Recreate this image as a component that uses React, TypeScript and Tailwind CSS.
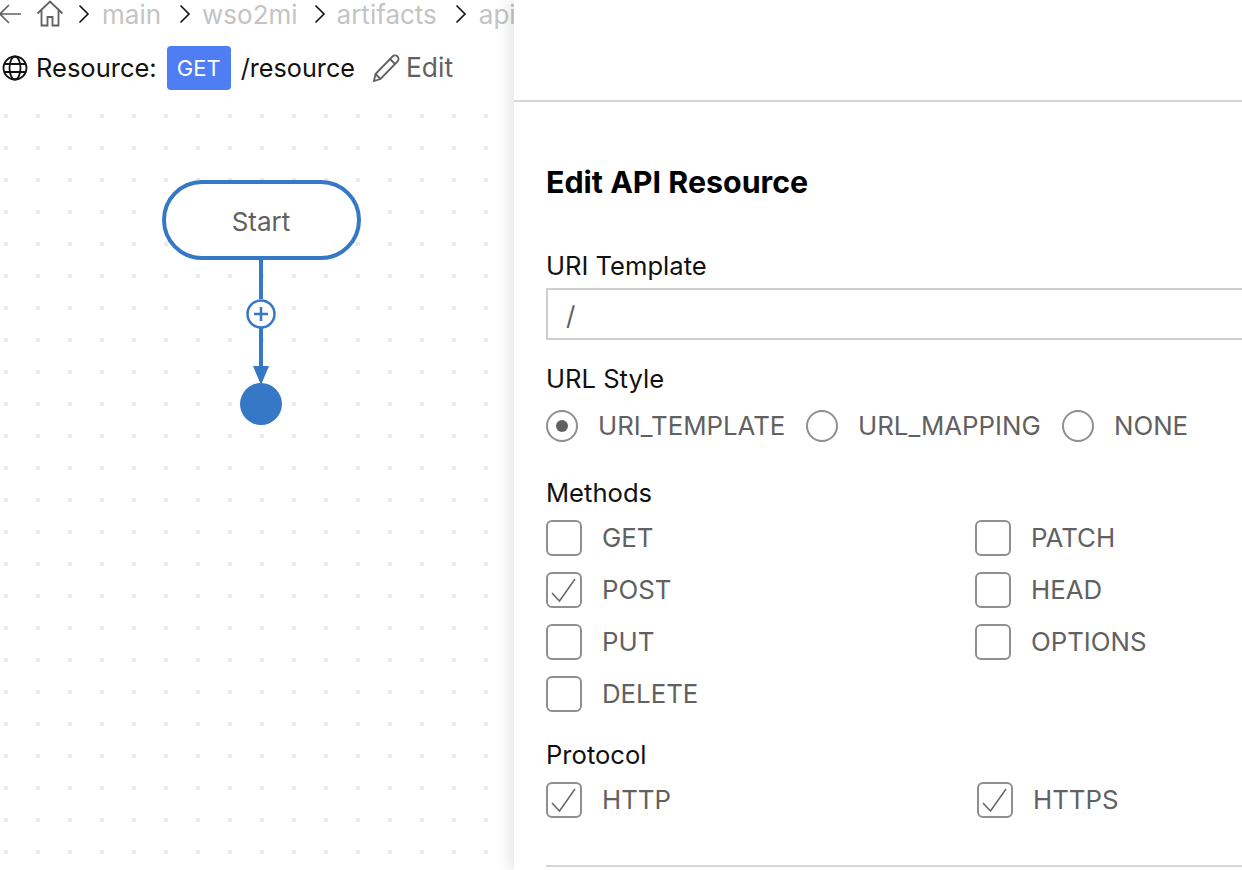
import React from "react";

const font = "font-['Inter',sans-serif]";

function Chevron() {
  return (
    <svg width="12" height="20" viewBox="0 0 12 20" fill="none" stroke="#111" strokeWidth="1.6" className="shrink-0">
      <path d="M1.5 1.5 10 10 1.5 18.5" />
    </svg>
  );
}

function Check({ label, checked }: { label: string; checked?: boolean }) {
  return (
    <div className="flex items-center gap-[20px] h-[36px]">
      <div className="w-[36px] h-[36px] rounded-[6px] border-2 border-[#8f8f8f] flex items-center justify-center shrink-0">
        {checked && (
          <svg width="32" height="32" viewBox="0 0 32 32" fill="none" stroke="#666" strokeWidth="1.5">
            <path d="M4 19 11.5 27 27 5" />
          </svg>
        )}
      </div>
      <span className="text-[25.800px] leading-[36px] text-[#616161]">{label}</span>
    </div>
  );
}

function Radio({ label, checked, w }: { label: string; checked?: boolean; w: string }) {
  return (
    <div className={`flex items-center gap-[20px] ${w}`}>
      <div className="w-[32px] h-[32px] rounded-full border-2 border-[#8f8f8f] flex items-center justify-center shrink-0">
        {checked && <div className="w-[12px] h-[12px] rounded-full bg-[#616161]" />}
      </div>
      <span className="text-[25.800px] leading-[36px] text-[#616161] whitespace-nowrap">{label}</span>
    </div>
  );
}

export default function App() {
  return (
    <div className={`${font} w-[1242px] h-[870px] overflow-hidden bg-white flex`}>
      <div className="w-[514px] shrink-0 h-full overflow-hidden flex flex-col">
        <div className="h-[28px] flex items-center whitespace-nowrap -ml-[3px] shrink-0">
          <svg width="26" height="24" viewBox="0 0 26 24" fill="none" stroke="#616161" strokeWidth="1.6" className="shrink-0">
            <path d="M24 12H3M12 3 3 12l9 9" />
          </svg>
          <svg width="28" height="28" viewBox="0 0 28 28" fill="none" stroke="#616161" strokeWidth="1.8" className="ml-[13px] shrink-0">
            <path d="M1.500 13.500 14 1.500l12.500 12M5.500 10v15.500h6V17h5v8.500h6V10" />
          </svg>
          <div className="ml-[14px]"><Chevron /></div>
          <span className="ml-[12px] text-[26px] text-[#c4c4c4]">main</span>
          <div className="ml-[18px]"><Chevron /></div>
          <span className="ml-[11px] text-[26px] text-[#c4c4c4]">wso2mi</span>
          <div className="ml-[16px]"><Chevron /></div>
          <span className="ml-[11px] text-[26px] text-[#c4c4c4]">artifacts</span>
          <div className="ml-[18px]"><Chevron /></div>
          <span className="ml-[12px] text-[26px] text-[#c4c4c4]">api</span>
        </div>
        <div className="h-[44px] mt-[18px] flex items-center whitespace-nowrap pl-[2px] shrink-0">
          <svg width="26" height="26" viewBox="0 0 26 26" fill="none" stroke="#111" strokeWidth="1.8" className="shrink-0">
            <circle cx="13" cy="13" r="11.500" />
            <ellipse cx="13" cy="13" rx="5.500" ry="11.500" />
            <path d="M2 9h22M2 17h22" />
          </svg>
          <span className="ml-[8px] pt-[1px] text-[25.500px] text-[#111]">Resource:</span>
          <span className="ml-[10px] w-[64px] h-[44px] rounded-[4px] bg-[#4f7df3] text-white text-[22px] flex items-center justify-center">GET</span>
          <span className="ml-[10px] pt-[2px] text-[25.200px] text-[#111]">/resource</span>
          <svg width="30" height="30" viewBox="0 0 30 30" fill="none" stroke="#616161" strokeWidth="1.8" className="ml-[17px] shrink-0">
            <path d="M2 28l1.500-7L20.500 3.500a3.500 3.500 0 0 1 5 0 3.500 3.500 0 0 1 0 5L8.500 26z M3.500 21 8.500 26 M18 6l5.500 5.500" />
          </svg>
          <span className="ml-[4px] text-[26.400px] text-[#616161]">Edit</span>
        </div>
        <div className="flex-1 flex flex-col items-center bg-[radial-gradient(#e6eaef_2px,transparent_2.500px)] bg-[size:32px_32px] bg-[position:-10px_10px]">
          <div className="mt-[90px] ml-[8px] flex flex-col items-center">
            <div className="w-[199px] h-[80px] rounded-full border-[4px] border-[#3678c6] bg-white flex items-center justify-center text-[26px] text-[#616161] pt-[3px]">Start</div>
            <svg width="44" height="166" viewBox="0 0 44 166" className="-mt-[1px] block">
              <path d="M22 0V40M22 69V112" stroke="#3678c6" strokeWidth="4" fill="none" />
              <circle cx="22" cy="55" r="13.500" fill="#fff" stroke="#3678c6" strokeWidth="2.500" />
              <path d="M15 55H29M22 48V62" stroke="#3678c6" strokeWidth="2.500" fill="none" />
              <path d="M14 107H30L22 126Z" fill="#3678c6" />
              <circle cx="22" cy="145" r="21" fill="#3678c6" />
            </svg>
          </div>
        </div>
      </div>
      <div className="flex-1 min-w-0 h-full relative bg-white shadow-[-6px_0_12px_rgba(0,0,0,0.09)] flex flex-col overflow-hidden">
        <div className="h-[102px] border-b-2 border-[#d6d6d6] shrink-0" />
        <div className="pl-[32px] flex flex-col -mr-[40px]">
          <h1 className="mt-[60px] text-[30.400px] leading-[40px] font-bold text-black">Edit API Resource</h1>
          <label className="mt-[46px] text-[25.600px] leading-[36px] text-[#111]">URI Template</label>
          <div className="mt-[4px] h-[52px] border-2 border-[#cfcfcf] flex items-center pl-[18px] pt-[2px] text-[26px] text-[#616161]">/</div>
          <label className="mt-[21px] text-[25.600px] leading-[36px] text-[#111]">URL Style</label>
          <div className="mt-[11px] flex items-center h-[36px]">
            <Radio label="URI_TEMPLATE" checked w="w-[260px]" />
            <Radio label="URL_MAPPING" w="w-[256px]" />
            <Radio label="NONE" w="w-[150px]" />
          </div>
          <label className="mt-[31px] text-[25.600px] leading-[36px] text-[#111]">Methods</label>
          <div className="mt-[9px] grid grid-cols-[429px_1fr] gap-y-[16px]">
            <Check label="GET" />
            <Check label="PATCH" />
            <Check label="POST" checked />
            <Check label="HEAD" />
            <Check label="PUT" />
            <Check label="OPTIONS" />
            <Check label="DELETE" />
          </div>
          <label className="mt-[25px] text-[25.600px] leading-[36px] text-[#111]">Protocol</label>
          <div className="mt-[9px] grid grid-cols-[431px_1fr]">
            <Check label="HTTP" checked />
            <Check label="HTTPS" checked />
          </div>
          <div className="mt-[47px] border-t-2 border-[#d6d6d6]" />
        </div>
      </div>
    </div>
  );
}
